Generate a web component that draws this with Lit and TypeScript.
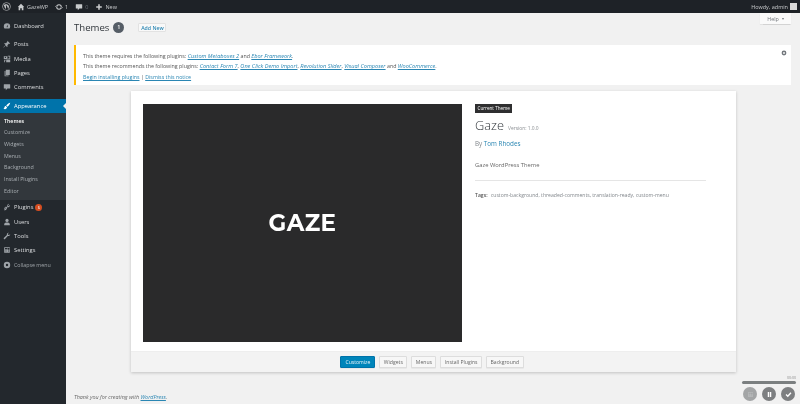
import { LitElement, html, css, svg } from 'lit';
import { customElement } from 'lit/decorators.js';

const icons: Record<string, unknown> = {
  dashboard: svg`<path d="M10 3a8 8 0 0 0-8 8c0 2 .7 3.800 1.900 5.200h12.200A8 8 0 0 0 18 11a8 8 0 0 0-8-8zm1.500 9.500-1.500 1-1-1.500 4-6z"/>`,
  posts: svg`<path d="M11 2l7 7-2 1-1-1-4 4 .5 3-1.500 1.500-3.500-3.500L2 19l-1-1 5.500-5.500L3 9l1.500-1.500 3 .5 4-4-1.500-1z"/>`,
  media: svg`<path d="M2 3h9v7H2zm4 1.500a1.500 1.500 0 1 0 0 3 1.500 1.500 0 0 0 0-3zM8 11h10v7H8zm4-9h6v8h-6v-1h4V4h-4zM3 12h4v2H5v4H3z"/>`,
  pages: svg`<path d="M7 2h10v13H7zM4 5h2v11h8v2H4z"/>`,
  comments: svg`<path d="M3 3h14a1 1 0 0 1 1 1v9a1 1 0 0 1-1 1h-6l-4 4v-4H3a1 1 0 0 1-1-1V4a1 1 0 0 1 1-1z"/>`,
  appearance: svg`<path d="M18 2c-3 .5-8 4-10 7l3 3c3-2 6.500-7 7-10zM7 10c-2 0-3 1.500-3.500 3.500C3 15 2.500 16 1 16.500 3 18 6 18.500 8 17c1.500-1.200 2-3 2-4z"/>`,
  plugins: svg`<path d="M13 2l1.500 1.500-2.500 2.500 2 2 2.500-2.500L18 7l-3 3c-1 1-2.500 1.200-4 .5l-1.500 1.500c.5 1 .5 2-.2 3L7 17.300C6 18 4.500 18 3 18v-1l5-5-1-1-4.500 4.500 0-2 3-3.300c1-.8 2-.8 3-.2L11 8.500c-.7-1.500-.5-3 .5-4z"/>`,
  users: svg`<circle cx="10" cy="6" r="4"/><path d="M10 11c-4 0-7 1.500-7 4v3h14v-3c0-2.500-3-4-7-4z"/>`,
  tools: svg`<path d="M18 5.500a4.500 4.500 0 0 1-6 4.200L5 17.500a2 2 0 0 1-3-2.500l7.800-7.200A4.500 4.500 0 0 1 15 2l-3 2.500.5 2.500 2.500.8z"/>`,
  settings: svg`<path fill-rule="evenodd" d="M3 3h14v14H3zm2 2v3h2v7h1V8h2V5zm6 0v4h2v6h1V9h2V5z"/>`,
  collapse: svg`<path fill-rule="evenodd" d="M10 2a8 8 0 1 1 0 16 8 8 0 0 1 0-16zm0 5a3 3 0 1 0 0 6 3 3 0 0 0 0-6z"/>`,
  home: svg`<path d="M10 2l8 8h-2v8h-4v-5H8v5H4v-8H2z"/>`,
  updates: svg`<path fill-rule="evenodd" d="M10 3a7 7 0 1 1 0 14 7 7 0 0 1 0-14zm0 2.500a4.500 4.500 0 1 0 0 9 4.500 4.500 0 0 0 0-9zM0 10l3-3 3 3zm14 0h6l-3 3z"/>`,
  plus: svg`<path d="M8 3h4v5h5v4h-5v5H8v-5H3V8h5z"/>`,
  wp: svg`<path fill-rule="evenodd" d="M10 1a9 9 0 1 1 0 18 9 9 0 0 1 0-18zm0 1.200a7.800 7.800 0 1 0 0 15.600 7.800 7.800 0 0 0 0-15.600zM4.500 7.500l3 8.500 1.700-5-1.200-3.500h2.800l3 8.500 1.200-4c.5-1.800.5-3.500-1-4.800a6.700 6.700 0 0 0-10.500.3z"/>`,
};

const icon = (name: string) =>
  html`<svg class="icon" viewBox="0 0 20 20" fill="currentColor">${icons[name]}</svg>`;

@customElement('app-root')
export class AppRoot extends LitElement {
  static styles = css`
    :host {
      display: block;
      width: 800px;
      height: 404px;
      overflow: hidden;
      position: relative;
      font-family: 'Open Sans', sans-serif;
      background: #f1f1f1;
      color: #444;
      font-size: 5.5px;
      filter: blur(0.4px);
    }
    a {
      color: #2a86b3;
      text-decoration: underline;
    }
    .icon {
      width: 8px;
      height: 8px;
      display: block;
      flex: none;
    }

    .adminbar {
      height: 13px;
      background: #1e2227;
      color: #c8cacc;
      display: flex;
      align-items: center;
      font-size: 5.5px;
    }
    .adminbar .wp {
      margin: 0 6px 0 2px;
    }
    .adminbar .wp .icon {
      width: 9px;
      height: 9px;
    }
    .bar-item {
      display: flex;
      align-items: center;
      gap: 2px;
      margin-right: 7px;
    }
    .howdy {
      margin-left: auto;
      display: flex;
      align-items: center;
      gap: 2px;
      margin-right: 3px;
    }
    .avatar {
      width: 7px;
      height: 7px;
      background: #d8d8d8;
    }
    .dim {
      color: #6b7076;
    }

    .body {
      display: flex;
      height: 391px;
    }

    .sidebar {
      width: 66px;
      flex: none;
      background: #23282d;
      color: #dcdee0;
      padding-top: 5.5px;
      box-sizing: border-box;
      font-size: 5.8px;
    }
    .menu-item {
      height: 14.4px;
      display: flex;
      align-items: center;
      padding-left: 3px;
      gap: 3px;
    }
    .menu-item .icon {
      color: #9ea3a8;
    }
    .gap {
      height: 4.2px;
    }
    .menu-item.current {
      background: #0073aa;
      color: #fff;
      position: relative;
    }
    .menu-item.current .icon {
      color: #fff;
    }
    .menu-item.current::after {
      content: '';
      position: absolute;
      right: 0;
      top: 4px;
      border: 3px solid transparent;
      border-right-color: #f1f1f1;
    }
    .submenu {
      background: #32373c;
      padding: 2.5px 0 2.5px 4px;
      font-size: 5.3px;
      color: #a9aeb3;
    }
    .submenu div {
      height: 11.7px;
      line-height: 11.7px;
    }
    .submenu .on {
      color: #fff;
      font-weight: 600;
    }
    .badge {
      background: #d54e21;
      color: #fff;
      width: 7px;
      height: 7px;
      border-radius: 50%;
      font-size: 4px;
      line-height: 7px;
      text-align: center;
      margin-left: -1px;
    }
    .collapse {
      color: #a0a5aa;
      font-size: 5.3px;
    }

    .main {
      flex: 1;
      min-width: 0;
      padding: 0 9px 0 8px;
      position: relative;
    }
    .help {
      position: absolute;
      top: 0;
      right: 9px;
      width: 31px;
      height: 11px;
      background: #fafafa;
      box-shadow: 0 0.5px 1px rgba(0, 0, 0, 0.12);
      display: flex;
      align-items: center;
      justify-content: center;
      gap: 3px;
      color: #72777c;
      font-size: 5.4px;
    }
    .caret {
      border: 1.5px solid transparent;
      border-top: 2px solid #72777c;
      border-bottom: 0;
    }
    .heading {
      display: flex;
      align-items: center;
      height: 14px;
      margin-top: 7px;
    }
    .heading h1 {
      margin: 0;
      font-size: 9.6px;
      font-weight: 400;
      color: #32373c;
    }
    .count {
      width: 11px;
      height: 11px;
      border-radius: 50%;
      background: #555d66;
      color: #fff;
      font-size: 5.4px;
      font-weight: 600;
      line-height: 11px;
      text-align: center;
      margin-left: 4px;
    }
    .add {
      margin-left: 14px;
      height: 9px;
      width: 28px;
      background: #f9f9f9;
      border: 0.5px solid #e2e2e2;
      box-sizing: border-box;
      text-align: center;
      line-height: 8px;
      color: #2a86b3;
      font-weight: 600;
      font-size: 5.2px;
      border-radius: 1px;
    }
    .notice {
      margin-top: 11px;
      height: 40px;
      box-sizing: border-box;
      background: #fff;
      border-left: 2px solid #ffb900;
      padding: 5.5px 0 0 7px;
      position: relative;
      font-size: 5.3px;
      color: #555;
    }
    .notice p {
      margin: 0;
      height: 10.7px;
      line-height: 10.7px;
      white-space: nowrap;
    }
    .notice em {
      font-style: italic;
      font-size: 5.6px;
    }
    .dismiss {
      position: absolute;
      right: 4px;
      top: 5px;
      color: #72777c;
    }
    .dismiss .icon {
      width: 6px;
      height: 6px;
    }

    .card {
      width: 605px;
      height: 281px;
      margin: 6px 0 0 57px;
      background: #fff;
      box-shadow: 0 1px 3px rgba(0, 0, 0, 0.2);
      display: flex;
      flex-direction: column;
    }
    .top {
      flex: 1;
      display: flex;
      padding: 13px 12px 0;
      min-height: 0;
    }
    .shot {
      width: 319px;
      height: 238px;
      flex: none;
      background: #2a2a2b;
      color: #fff;
      display: flex;
      align-items: center;
      justify-content: center;
      font-family: 'Montserrat', 'Open Sans', sans-serif;
      font-size: 23px;
      font-weight: 700;
      letter-spacing: 0.4px;
    }
    .info {
      margin-left: 13px;
      width: 231px;
    }
    .tag {
      display: inline-block;
      background: #2f2f30;
      color: #fff;
      font-size: 4.6px;
      height: 9px;
      line-height: 9px;
      padding: 0 2.5px;
      vertical-align: top;
    }
    .name {
      margin-top: 3px;
      font-size: 12.8px;
      line-height: 18px;
      font-weight: 300;
      color: #32373c;
      display: flex;
      align-items: baseline;
      gap: 4px;
    }
    .name span {
      font-size: 4.9px;
      color: #8a8e92;
      font-weight: 400;
    }
    .author {
      font-size: 6.3px;
      color: #82878c;
      margin-top: 2px;
      line-height: 9px;
    }
    .author a {
      text-decoration: none;
    }
    .desc {
      font-size: 5.8px;
      color: #666;
      margin-top: 13px;
      line-height: 8px;
    }
    .tags {
      margin-top: 11px;
      padding-top: 11px;
      border-top: 0.5px solid #e5e5e5;
      font-size: 5.1px;
      line-height: 7px;
      color: #82878c;
      white-space: nowrap;
    }
    .tags b {
      color: #555;
      font-weight: 600;
      margin-right: 2px;
    }
    .actions {
      height: 21px;
      flex: none;
      background: #f3f3f3;
      border-top: 0.5px solid #eee;
      box-sizing: border-box;
      display: flex;
      align-items: center;
      justify-content: center;
      gap: 4px;
      padding-right: 3px;
    }
    .btn {
      height: 11.5px;
      box-sizing: border-box;
      background: #f7f7f7;
      border: 0.5px solid #ddd;
      border-radius: 1px;
      padding: 0 3.5px;
      line-height: 10.5px;
      font-size: 5.1px;
      color: #666;
      box-shadow: 0 0.5px 0 #ddd;
    }
    .btn.primary {
      background: #0085ba;
      border-color: #0073aa;
      color: #e8f4fa;
      padding: 0 4px;
    }

    .footer {
      position: absolute;
      left: 8px;
      bottom: 3px;
      font-size: 5.4px;
      font-style: italic;
      color: #666;
    }

    .player {
      position: absolute;
      right: 4px;
      bottom: 3px;
      width: 54px;
    }
    .time {
      text-align: right;
      font-size: 3.5px;
      color: #888;
      height: 4px;
      line-height: 4px;
    }
    .track {
      height: 3px;
      border-radius: 1.5px;
      background: #7b7f80;
      margin: 1px 0 3px;
    }
    .controls {
      display: flex;
      gap: 5px;
      padding-left: 1px;
    }
    .round {
      width: 14px;
      height: 14px;
      border-radius: 50%;
      background: #7d7f81;
      color: #fff;
      display: flex;
      align-items: center;
      justify-content: center;
    }
    .round.light {
      background: #a3a5a6;
      color: #b5b7b8;
    }
    .round .icon {
      width: 7px;
      height: 7px;
    }
  `;

  private menu(name: string, label: unknown, cls = '') {
    return html`<div class="menu-item ${cls}">${icon(name)}<span>${label}</span></div>`;
  }

  render() {
    return html`
      <div class="adminbar">
        <div class="wp">${icon('wp')}</div>
        <div class="bar-item">${icon('home')}<span>GazeWP</span></div>
        <div class="bar-item">${icon('updates')}<span>1</span></div>
        <div class="bar-item">${icon('comments')}<span class="dim">0</span></div>
        <div class="bar-item">${icon('plus')}<span>New</span></div>
        <div class="howdy"><span>Howdy, admin</span><div class="avatar"></div></div>
      </div>
      <div class="body">
        <nav class="sidebar">
          ${this.menu('dashboard', 'Dashboard')}
          <div class="gap"></div>
          ${this.menu('posts', 'Posts')} ${this.menu('media', 'Media')}
          ${this.menu('pages', 'Pages')} ${this.menu('comments', 'Comments')}
          <div class="gap"></div>
          ${this.menu('appearance', 'Appearance', 'current')}
          <div class="submenu">
            <div class="on">Themes</div>
            <div>Customize</div>
            <div>Widgets</div>
            <div>Menus</div>
            <div>Background</div>
            <div>Install Plugins</div>
            <div>Editor</div>
          </div>
          <div class="menu-item">${icon('plugins')}<span>Plugins</span><span class="badge">6</span></div>
          ${this.menu('users', 'Users')} ${this.menu('tools', 'Tools')}
          ${this.menu('settings', 'Settings')}
          ${this.menu('collapse', 'Collapse menu', 'collapse')}
        </nav>
        <main class="main">
          <div class="help">Help <span class="caret"></span></div>
          <div class="heading">
            <h1>Themes</h1>
            <span class="count">1</span>
            <span class="add">Add New</span>
          </div>
          <div class="notice">
            <p>This theme requires the following plugins: <a href="#"><em>Custom Metaboxes 2</em></a> and <a href="#"><em>Ebor Framework</em></a>.</p>
            <p>This theme recommends the following plugins: <a href="#"><em>Contact Form 7</em></a>, <a href="#"><em>One Click Demo Import</em></a>, <a href="#"><em>Revolution Slider</em></a>, <a href="#"><em>Visual Composer</em></a> and <a href="#"><em>WooCommerce</em></a>.</p>
            <p><a href="#">Begin installing plugins</a> | <a href="#">Dismiss this notice</a></p>
            <div class="dismiss">${icon('collapse')}</div>
          </div>
          <section class="card">
            <div class="top">
              <div class="shot">GAZE</div>
              <div class="info">
                <span class="tag">Current Theme</span>
                <div class="name">Gaze <span>Version: 1.0.0</span></div>
                <div class="author">By <a href="#">Tom Rhodes</a></div>
                <div class="desc">Gaze WordPress Theme</div>
                <div class="tags"><b>Tags:</b> custom-background, threaded-comments, translation-ready, custom-menu</div>
              </div>
            </div>
            <div class="actions">
              <span class="btn primary">Customize</span>
              <span class="btn">Widgets</span>
              <span class="btn">Menus</span>
              <span class="btn">Install Plugins</span>
              <span class="btn">Background</span>
            </div>
          </section>
          <div class="footer">Thank you for creating with <a href="#">WordPress</a>.</div>
        </main>
      </div>
      <div class="player">
        <div class="time">00:00</div>
        <div class="track"></div>
        <div class="controls">
          <div class="round light">${icon('settings')}</div>
          <div class="round"><svg class="icon" viewBox="0 0 20 20" fill="currentColor"><path d="M5 3h4v14H5zm6 0h4v14h-4z"/></svg></div>
          <div class="round"><svg class="icon" viewBox="0 0 20 20" fill="none" stroke="currentColor" stroke-width="4"><path d="M3 10l5 5 9-10"/></svg></div>
        </div>
      </div>
    `;
  }
}
